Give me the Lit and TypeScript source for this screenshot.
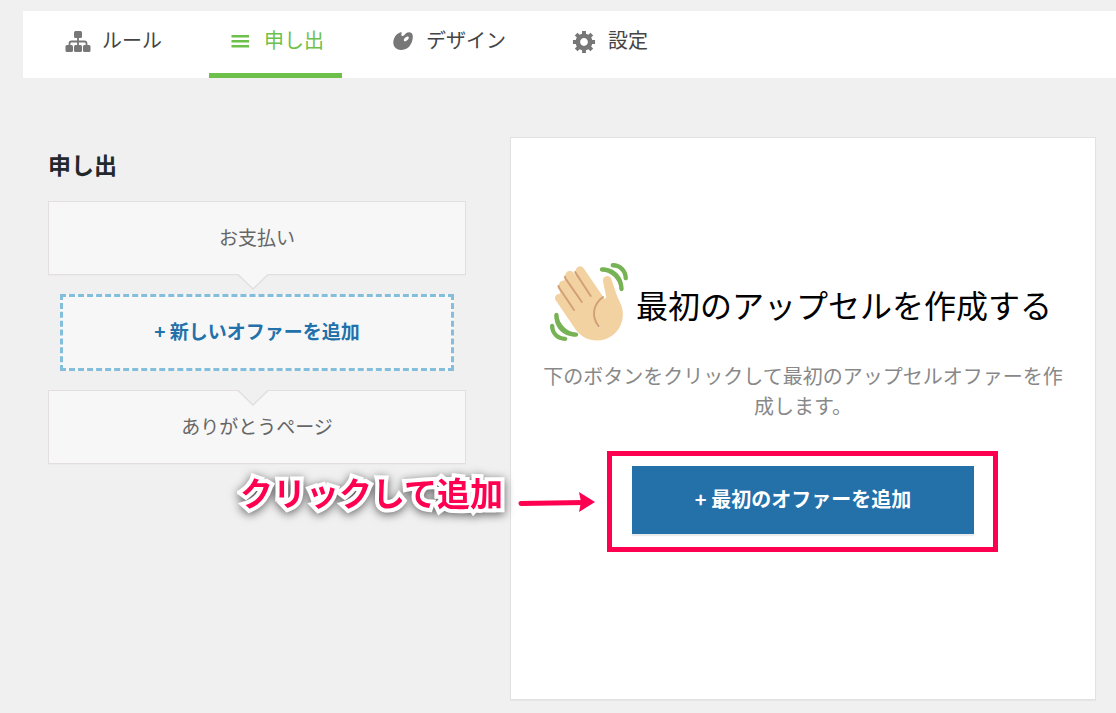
import { LitElement, html, svg, css } from "lit";
import { customElement, property, state } from "lit/decorators.js";

const icons: Record<string, unknown> = {
  rules: svg`<svg viewBox="0 0 26 22" width="26" height="22" fill="currentColor">
    <rect x="9" y="0" width="8" height="7" rx="1.5"/>
    <path d="M4.5 15v-2.5q0-2 2-2h13q2 0 2 2V15M13 6v9" fill="none" stroke="currentColor" stroke-width="1.8"/>
    <rect x=".5" y="14" width="7.5" height="7" rx="1.5"/><rect x="9" y="14" width="8" height="7" rx="1.5"/><rect x="18" y="14" width="7.5" height="7" rx="1.5"/></svg>`,
  offers: svg`<svg viewBox="0 0 26 22" width="26" height="22" fill="currentColor">
    <path d="M4.5 4h17.500v2.500H4.500zM4.500 9h17.500v2.500H4.500zM4.500 14h17.500v2.500H4.500z"/></svg>`,
  design: svg`<svg viewBox="-4 -1 26 22" width="26" height="22" fill="currentColor" fill-rule="evenodd">
    <path d="M7 .5C8.500 0 9 .5 8.500 1.800 8 3 8.300 4 9.500 4 11 4 11.500 2.500 13 1.200 15-.3 18.500-.3 19.500 2.500 20.500 6 19 12 15.500 15.200 11 19 4 19 1.300 14.500-1.300 9.500 1.500 2.500 7 .5zM11 9c1 1.200 5-1.200 4.800-3.800C15.300 3.200 10 6 11 9z"/></svg>`,
  settings: svg`<svg viewBox="-.5 .5 20 20" width="26" height="26" fill="currentColor">
    <path d="M18 12h-2.180c-.17.7-.44 1.350-.81 1.930l1.540 1.540-2.100 2.100-1.540-1.540c-.58.36-1.230.63-1.910.79V19H8v-2.180c-.68-.16-1.330-.43-1.910-.79l-1.540 1.540-2.120-2.120 1.540-1.540c-.36-.58-.63-1.230-.79-1.910H1V9.030h2.170c.16-.7.44-1.350.8-1.940L2.430 5.550l2.100-2.100 1.540 1.540c.58-.37 1.240-.64 1.930-.81V2h3v2.180c.68.16 1.330.43 1.910.79l1.540-1.540 2.120 2.120-1.540 1.540c.36.59.64 1.240.8 1.940H18V12zm-8.500 1.500c1.660 0 3-1.340 3-3s-1.340-3-3-3-3 1.340-3 3 1.340 3 3 3z"/></svg>`,
};

const tabs = [
  { id: "rules", label: "ルール" },
  { id: "offers", label: "申し出" },
  { id: "design", label: "デザイン" },
  { id: "settings", label: "設定" },
];

@customElement("funnel-tabs")
class FunnelTabs extends LitElement {
  static styles = css`
    :host { display: block; background: #fff; }
    .bar { display: flex; gap: 29px; padding-left: 24px; }
    .tab {
      display: flex; align-items: center; gap: 11px;
      padding: 14px 18px 18px; border-bottom: 5px solid transparent;
      color: #444; text-decoration: none; font-size: 20px; line-height: 30px; white-space: nowrap;
    }
    .glyph { display: grid; place-items: center; width: 26px; height: 26px; padding-top: 4px; color: #777; }
    .active { color: #6dc04a; border-color: #6dc04a; }
    .active .glyph { color: inherit; }
  `;
  @state() current = "offers";

  render() {
    return html`<nav class="bar">
      ${tabs.map((t) => html`<a class="tab ${t.id === this.current ? "active" : ""}" href="#${t.id}"
        @click=${() => (this.current = t.id)}><span class="glyph">${icons[t.id]}</span><span>${t.label}</span></a>`)}
    </nav>`;
  }
}

@customElement("funnel-step")
class FunnelStep extends LitElement {
  static styles = css`
    :host { display: block; }
    .card {
      position: relative; padding: 20px 21px 22px; border: 1px solid #e3dfe0; background: #f7f7f7;
      box-shadow: 0 1px 1px rgba(0, 0, 0, 0.02);
      color: #666; font-size: 19px; line-height: 30px; text-align: center;
    }
    .pointer { position: absolute; left: calc(50% - 20px); display: block; }
    .out { top: 100%; }
    .in { top: -1px; }
  `;
  @property() label = "";
  @property() pointer = "out";

  render() {
    const fill = this.pointer === "out" ? "#f7f7f7" : "#f0f0f0";
    return html`<div class="card">${this.label}
      <svg class="pointer ${this.pointer}" width="32" height="16" viewBox="0 0 32 16">
        <path d="M1 0L16 15L31 0z" fill=${fill}/>
        <path d="M1 .5L16 15L31 .5" fill="none" stroke="#e3dfe0" stroke-width="1.5"/>
      </svg></div>`;
  }
}

@customElement("app-root")
class AppRoot extends LitElement {
  static styles = css`
    :host {
      display: block; box-sizing: border-box; min-height: 100vh; padding: 11px 0 13px 23px;
      background: #f0f0f0; font-family: "Noto Sans CJK JP", sans-serif;
    }
    .content {
      display: grid; grid-template-columns: 418fr 586fr; gap: 44px;
      padding: 59px 20px 0 25px;
    }
    .steps { padding-top: 12px; }
    .title { margin: 0 0 22px; color: #23282d; font-size: 23px; line-height: 30px; font-weight: 700; }
    .list { display: grid; gap: 19px; }
    button { font-family: inherit; font-weight: 700; cursor: pointer; }
    .add {
      margin: 0 12px; padding: 19px 20px 22px; border: 3px dashed #83bfdc; background: #f7f7f7;
      color: #2271aa; font-size: 19px; line-height: 30px;
    }
    .panel {
      display: flex; flex-direction: column; align-items: center;
      padding: 125px 32px 165px; border: 1px solid #e2e2e2; background: #fff;
      box-shadow: 0 1px 1px rgba(0, 0, 0, 0.04); text-align: center;
    }
    .welcome {
      display: flex; align-items: center; gap: 8px; margin: 0; padding-right: 4px;
      color: #000; font-size: 32px; line-height: 48px; font-weight: 400; white-space: nowrap;
    }
    .welcome-text { padding-top: 4px; }
    .text { margin: 20px 0 45px; color: #888; font-size: 20px; line-height: 30px; }
    .action { position: relative; }
    .first {
      display: block; width: 342px; padding: 18px 0 20px; border: 0; background: #2471aa;
      box-shadow: 0 2px 1px rgba(0, 0, 0, 0.08); color: #fff; font-size: 20px; line-height: 30px;
    }
    .frame { position: absolute; inset: -15px -24px -18px -25px; border: 5px solid #ff0050; pointer-events: none; }
    .callout {
      position: absolute; top: 0; right: calc(100% + 36px); display: flex; align-items: center; gap: 15px;
      color: #ff0050; font-size: 33px; line-height: 52px; font-weight: 700; white-space: nowrap; pointer-events: none;
    }
    .callout-text {
      -webkit-text-stroke: 8px #fff; paint-order: stroke fill; stroke-linejoin: round;
      filter: drop-shadow(0 2px 5px rgba(0, 0, 0, 0.6));
    }
    .arrow { margin-top: 20px; }
  `;

  render() {
    return html`
      <funnel-tabs></funnel-tabs>
      <main class="content">
        <section class="steps">
          <h2 class="title">申し出</h2>
          <div class="list">
            <funnel-step label="お支払い"></funnel-step>
            <button class="add">+ 新しいオファーを追加</button>
            <funnel-step label="ありがとうページ" pointer="in"></funnel-step>
          </div>
        </section>
        <section class="panel">
          <h1 class="welcome">
            <svg width="78" height="78" viewBox="0 0 36 36" aria-hidden="true">
              <g fill="#F3D2A2">
                <path d="M4.861 9.147c.94-.657 2.357-.531 3.201.166l-.968-1.407c-.779-1.111-.5-2.313.612-3.093 1.112-.777 4.263 1.312 4.263 1.312-.786-1.122-.639-2.544.483-3.331 1.122-.784 2.670-.513 3.456.611l10.292 14.720L25 31 9.604 19.458 4.250 12.625c-.779-1.129-.519-2.694.611-3.478z"/>
                <path d="M4.200 11.500L4.800 14.400L11 24L16 24L20 16L8 6z"/>
                <path d="M2.695 17.336s-1.132-1.650.519-2.781c1.649-1.131 2.780.518 2.780.518l5.251 7.658c.181-.302.379-.6.6-.894L4.557 11.210s-1.131-1.649.519-2.780c1.649-1.131 2.780.518 2.780.518l6.855 9.997c.255-.208.516-.417.785-.622L7.549 6.732s-1.131-1.649.519-2.780c1.649-1.131 2.780.518 2.780.518l7.947 11.589c.292-.179.581-.334.871-.498L12.238 4.729s-1.131-1.649.518-2.780c1.649-1.131 2.780.518 2.780.518l7.854 11.454 1.194 1.742c-4.948 3.394-5.419 9.779-2.592 13.902.565.825 1.390.26 1.390.26-3.393-4.949-2.357-10.510 2.592-13.903L24.515 8.620s-.545-1.924 1.378-2.470c1.924-.545 2.470 1.379 2.470 1.379l1.685 5.004c.668 1.984 1.379 3.961 2.320 5.831 2.657 5.280 1.070 11.842-3.940 15.279-5.465 3.747-12.936 2.354-16.684-3.110L2.695 17.336z"/>
              </g>
              <g fill="none" stroke="#D2A077" stroke-width=".9" stroke-linecap="round">
                <path d="M3.900 10.600Q4 11.200 4.600 12L11.100 21.700M6.900 6.300Q6.900 6.900 7.500 7.700L14.700 18M11.600 4.200L18.800 15.200M24.500 15.700C20 18.800 18.800 24.500 22.500 29.400"/>
              </g>
              <g fill="#77B255">
                <path d="M12 32.042C8 32.042 3.958 28 3.958 24c0-.553-.405-1-.958-1s-1.042.447-1.042 1C1.958 30 6 34.042 12 34.042c.553 0 1-.489 1-1.042s-.447-.958-1-.958z"/>
                <path d="M7 34c-3 0-5-2-5-5 0-.553-.447-1-1-1s-1 .447-1 1c0 4 3 7 7 7 .553 0 1-.447 1-1s-.447-1-1-1zM24 2c-.552 0-1 .448-1 1s.448 1 1 1c4 0 8 3.589 8 8 0 .552.448 1 1 1s1-.448 1-1c0-5.514-4-10-10-10z"/>
                <path d="M29 .042c-.552 0-1 .406-1 .958s.448 1.042 1 1.042c3 0 4.958 2.225 4.958 4.958 0 .552.489 1 1.042 1s.958-.448.958-1C35.958 3.163 33 .042 29 .042z"/>
              </g>
            </svg>
            <span class="welcome-text">最初のアップセルを作成する</span>
          </h1>
          <p class="text">下のボタンをクリックして最初のアップセルオファーを作成します。</p>
          <div class="action">
            <button class="first">+ 最初のオファーを追加</button>
            <div class="frame"></div>
            <div class="callout">
              <span class="callout-text">クリックして追加</span>
              <svg class="arrow" width="78" height="22" viewBox="0 0 78 22" aria-hidden="true">
                <path d="M3 12.500L66 11.500" stroke="#ff0050" stroke-width="5" stroke-linecap="round"/>
                <path d="M61 1L77 11L61 21L63 11z" fill="#ff0050"/>
              </svg>
            </div>
          </div>
        </section>
      </main>`;
  }
}
